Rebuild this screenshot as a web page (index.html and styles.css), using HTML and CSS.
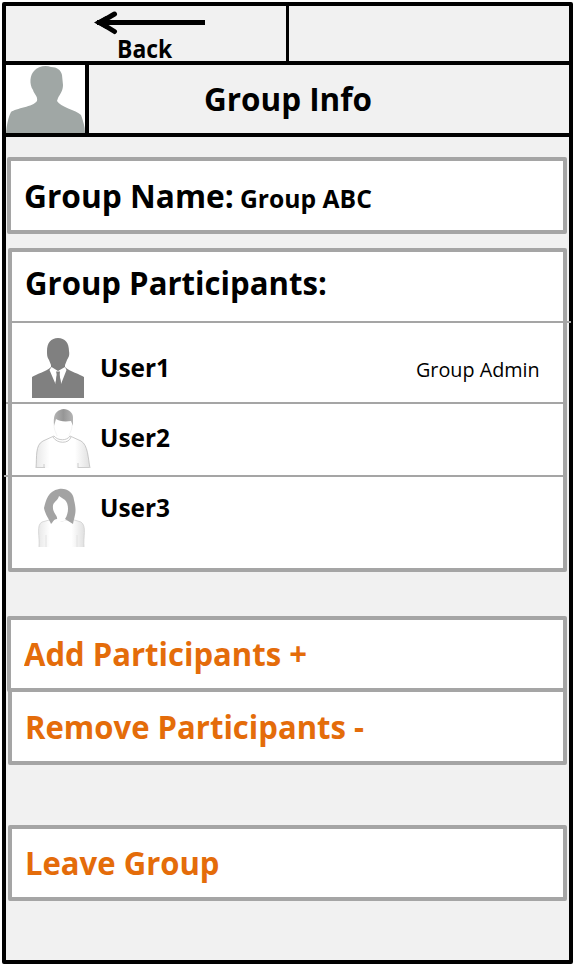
FILE: index.html
```html
<!DOCTYPE html>
<html lang="en">
<head>
<meta charset="utf-8">
<title>Group Info</title>
<link rel="stylesheet" href="styles.css">
</head>
<body>
<div class="phone">
  <nav class="topbar">
    <a class="back">
      <svg class="arrow" width="114" height="26" viewBox="0 0 114 26"><path d="M3 12.500H111" stroke="#000" stroke-width="5" fill="none"/><path d="M20.500 4L6 12.500L20.500 21.500" stroke="#000" stroke-width="5" stroke-linecap="round" fill="none"/><path d="M0 12.500L12 6V19Z"/></svg>
      <span class="t small w-back">Back</span>
    </a>
    <div class="blank"></div>
  </nav>
  <header class="title">
    <div class="photo"><svg width="79" height="68" viewBox="0 0 79 68"><path fill="#a0a7a5" d="M0 68C1 59 2 53 5 47C10 43 27 42 31 36C32 31 28 29 27 25C23 19 24 10 28 6C32 1 40 0 45 2C51 2 55 5 56 10L57 20C57 26 54 29 52 33L51 36C54 42 70 45 75 50C77 56 79 61 79 68Z"/></svg></div>
    <h1 class="t w-info">Group Info</h1>
  </header>
  <main>
    <section class="card name"><h2 class="t w-name">Group Name:</h2><span class="t small w-abc">Group ABC</span></section>
    <section class="card people">
      <div class="row heading"><h2 class="t w-people">Group Participants:</h2></div>
      <div class="row first">
        <svg class="face" width="60" height="66" viewBox="0 0 60 66"><path fill="#808080" d="M20 17C20 9 24 4 31 4S42 9 42 17C43 22 41 24 40 26L38 31V33C43 38 53 40 57 43V64H5V43C9 40 19 38 24 33V31L22 26C20 23 20 21 20 17Z"/><path fill="#fff" d="M24.500 33L31 37L38 33L39.500 36L34 50L32 38H30L28.500 50L22.500 36Z"/><path fill="#808080" d="M29 37.500H33L32.500 41L34 49L31 53L28.500 49L30 41Z"/></svg>
        <span class="t small w-user">User1</span><span class="t admin">Group Admin</span>
      </div>
      <div class="row second">
        <svg class="face" width="60" height="66" viewBox="0 0 60 66">
          <defs><linearGradient id="shirt"><stop offset="0" stop-color="#e8e8e8"/><stop offset=".25" stop-color="#fff"/><stop offset=".72" stop-color="#fff"/><stop offset="1" stop-color="#e0e0e0"/></linearGradient><linearGradient id="hair"><stop offset="0" stop-color="#b4b4b4"/><stop offset=".5" stop-color="#969696"/><stop offset="1" stop-color="#b4b4b4"/></linearGradient></defs>
          <path fill="url(#shirt)" stroke="#bbb" stroke-width=".8" d="M9 64C10 53 8 41 16 37L27 32C31 37 40 37 43 32L54 37C61 41 61 54 63 64"/><path fill="none" stroke="#bbb" stroke-width=".8" d="M26 33C30 40 42 40 44 33"/><path stroke="#ccc" d="M17 60V64M51 59V64M9 63.500H18M51 63.500H62"/>
          <path fill="url(#hair)" d="M27 22C26 12 28 8 33 6C39 3 46 8 46 13V22L44 17C37 18 32 17 29 15Z"/>
          <path fill="none" stroke="#eee" stroke-width=".7" d="M27 21C27 27 30 30 30 32M45 21C45 27 42 30 42 32"/>
        </svg>
        <span class="t small w-user">User2</span>
      </div>
      <div class="row third">
        <svg class="face" width="60" height="66" viewBox="0 0 60 66">
          <path fill="url(#shirt)" stroke="#ccc" stroke-width=".7" d="M12 59C13 49 9 37 15 34L26 31L35 33L44 31L54 34C60 38 56 49 57 59"/>
          <path stroke="#e2e2e2" d="M19 47V59M50 47V59"/>
          <path fill="#fff" d="M26 15H42V31C36 34 30 34 26 31Z"/>
          <path fill="#a3a3a3" d="M24 36C22 31 18 26 17 20C19 12 21 3 32 1C40 0 46 4 47 12C50 24 48 26 46 36L38 31C42 25 42 16 38 12L32 8C31 13 25 14 26 20C26 25 31 28 30 31C27 31 26 34 24 36Z"/>
        </svg>
        <span class="t small w-user">User3</span>
      </div>
    </section>
    <div class="actions">
      <a class="card add"><span class="t w-add">Add Participants +</span></a>
      <a class="card remove"><span class="t w-remove">Remove Participants -</span></a>
    </div>
    <a class="card leave"><span class="t w-leave">Leave Group</span></a>
  </main>
</div>
</body>
</html>
```
FILE: styles.css
```css
* { box-sizing: border-box; }
body { margin: 0; background: #fff; font-family: "Open Sans", "Liberation Sans", sans-serif; color: #000; }
h1, h2 { margin: 0; }
.phone { width: 571px; height: 962px; margin: 2px 0 0 2px; border: 4px solid #000; border-radius: 2px; background: #f1f1f1; }
.t { display: block; flex: none; white-space: nowrap; font-size: 32px; line-height: 40px; font-weight: 700; transform-origin: 0 50%; transform: scaleX(.97); font-variant-ligatures: none; }
.small { font-size: 25px; line-height: 30px; }
.w-back { transform: scaleX(.916); }
.w-info { transform: scaleX(.982); }
.w-name { transform: scaleX(.99); }
.w-abc { transform: scaleX(.987); }
.w-people { transform: scaleX(.972); }
.w-user { transform: scaleX(.976); }
.topbar { display: flex; height: 59px; border-bottom: 4px solid #000; }
.back { width: 283px; border-right: 3px solid #000; }
.arrow { display: block; margin: 4px 0 0 88px; }
.back .t { margin: -3px 0 0 111px; }
.title { display: flex; height: 72px; border-bottom: 4px solid #000; }
.photo { width: 83px; background: #fff; border-right: 4px solid #000; }
.photo svg { display: block; }
.title .t { margin: 14px 0 0 115px; }
.card { display: flex; background: #fff; border: 4px solid #a5a5a5; border-radius: 2px; margin: 0 2px; }
.name { height: 77px; margin: 20px 2px 14px 1px; padding: 15px 0 0 13px; align-items: flex-start; }
.name h2 { width: 216px; }
.name .small { margin-top: 7px; }
.people { flex-direction: column; height: 324px; }
.row { display: flex; position: relative; align-items: flex-start; }
.row::after { content: ""; position: absolute; bottom: 0; height: 2px; background: #a5a5a5; }
.heading { height: 71px; padding: 11px 0 0 13px; }
.heading::after { left: 0; right: -8px; }
.first { height: 81px; }
.first::after { left: -6px; right: 0; }
.second { height: 73px; }
.second::after { left: -8px; right: -4px; }
.third::after { display: none; }
.face { margin-left: 15px; flex: none; overflow: visible; }
.first .face { margin-top: 11px; }
.third .face { margin-top: 11px; }
.row .small { margin-left: 13px; width: 250px; }
.first .small { margin-top: 29px; }
.second .small { margin-top: 18px; }
.third .small { margin-top: 15px; }
.row .admin { font-size: 20.5px; line-height: 26px; font-weight: 400; margin: 33px 0 0 66px; transform: scaleX(.964); }
.actions { margin-top: 44px; }
.add { height: 76px; margin-left: 1px; padding: 14px 0 0 13px; }
.remove { height: 77px; margin-top: -4px; padding: 15px 0 0 13px; }
.leave { height: 76px; margin-top: 60px; padding: 14px 0 0 13px; }
.add, .remove, .leave { color: #e46c0a; }
```
